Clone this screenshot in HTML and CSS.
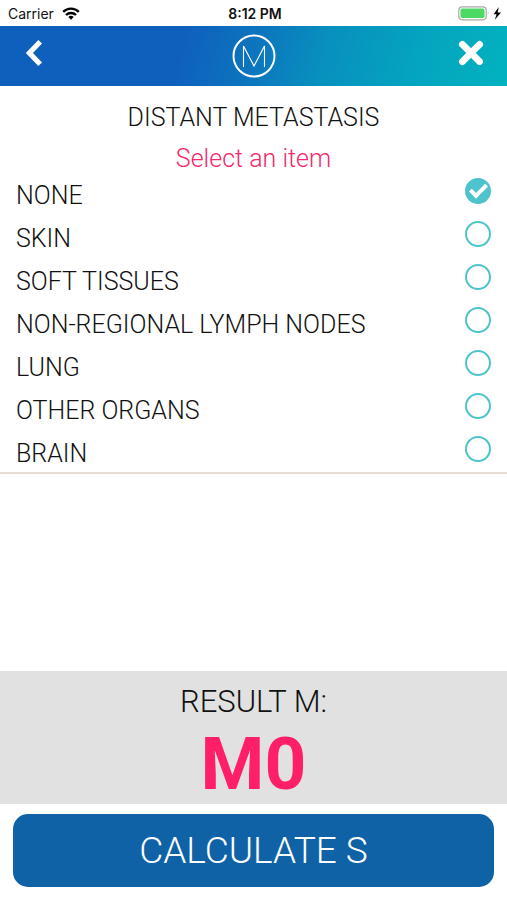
FILE: index.html
```html
<!DOCTYPE html>
<html lang="en">
<head>
<meta charset="utf-8">
<meta name="viewport" content="width=device-width, initial-scale=1">
<title>Distant metastasis</title>
<link rel="stylesheet" href="styles.css">
</head>
<body>
<div class="status">
  <div class="status-left">
    <span>Carrier</span>
    <svg width="18" height="13" viewBox="0 0 18 13" fill="none" stroke="#000" stroke-width="2.4" aria-hidden="true">
      <path d="M1.2 4.8a11.2 11.2 0 0 1 15.6 0"/>
      <path d="M4 8a7.2 7.2 0 0 1 10 0"/>
      <path d="M9 12.8L6.3 10.1a4 4 0 0 1 5.4 0z" fill="#000" stroke="none"/>
    </svg>
  </div>
  <span class="clock">8:12 PM</span>
  <div class="status-right">
    <svg width="44" height="15" viewBox="0 0 44 15" aria-hidden="true">
      <rect x=".8" y=".8" width="27.4" height="13" rx="3.5" fill="#fff" stroke="#a8a8a8" stroke-width="1.2"/>
      <rect x="2.5" y="2.5" width="24" height="9.6" rx="1.8" fill="#4cd964"/>
      <path d="M29.8 5.2q1.6 2.1 0 4.2z" fill="#a8a8a8"/>
      <path d="M40.8 1L35.6 8.2h3l-1.8 5.6 6.2-7.3h-3.4z" fill="#000"/>
    </svg>
  </div>
</div>
<header class="bar">
  <button class="bar-button" type="button" aria-label="Back">
    <svg width="28" height="28" viewBox="0 0 28 28" fill="none" stroke="#fff" stroke-width="5.2" aria-hidden="true"><path d="M18.2 2.8L7.4 14l10.8 11.2"/></svg>
  </button>
  <svg class="logo" width="44" height="44" viewBox="0 0 44 44" fill="none" stroke="#fff" aria-hidden="true">
    <circle cx="22" cy="22" r="20.5" stroke-width="2"/>
    <path d="M11.5 33V12L22 32l10.5-20V33" stroke-width="1.1"/>
  </svg>
  <button class="bar-button" type="button" aria-label="Close">
    <svg width="26" height="26" viewBox="0 0 26 26" fill="none" stroke="#fff" stroke-width="6.8" stroke-linecap="round" aria-hidden="true"><path d="M4.4 4.4l17.2 17.2M21.6 4.4L4.4 21.6"/></svg>
  </button>
</header>
<main class="content">
  <h1 class="title">DISTANT METASTASIS</h1>
  <p class="hint">Select an item</p>
  <div class="options" role="radiogroup" aria-label="Distant metastasis">
    <label class="option"><span>NONE</span><input type="radio" name="site" checked></label>
    <label class="option"><span>SKIN</span><input type="radio" name="site"></label>
    <label class="option"><span>SOFT TISSUES</span><input type="radio" name="site"></label>
    <label class="option"><span>NON-REGIONAL LYMPH NODES</span><input type="radio" name="site"></label>
    <label class="option"><span>LUNG</span><input type="radio" name="site"></label>
    <label class="option"><span>OTHER ORGANS</span><input type="radio" name="site"></label>
    <label class="option"><span>BRAIN</span><input type="radio" name="site"></label>
  </div>
</main>
<section class="result">
  <h2 class="result-label">RESULT M:</h2>
  <output class="result-value">M0</output>
</section>
<footer class="actions">
  <button class="calculate" type="button">CALCULATE S</button>
</footer>
</body>
</html>
```
FILE: styles.css
```css
*,
*::before {
  box-sizing: border-box;
}

body {
  margin: 0;
  min-height: 100vh;
  display: flex;
  flex-direction: column;
  background: #fff;
  color: #111;
  font-family: Roboto, "Liberation Sans", sans-serif;
  font-weight: 300;
}

h1, h2, p {
  margin: 0;
  font-weight: 300;
}

button {
  border: 0;
  padding: 0;
  cursor: pointer;
}

.status {
  display: grid;
  grid-template-columns: 1fr auto 1fr;
  align-items: center;
  height: 26px;
  padding: 1px 5px 0 8px;
  font: 400 14px/24px Inter, "Liberation Sans", sans-serif;
}

.status-left {
  display: flex;
  align-items: center;
  gap: 8px;
}

.status-right {
  display: flex;
  justify-content: flex-end;
}

.clock {
  font-weight: 600;
}

.bar {
  display: flex;
  align-items: center;
  justify-content: space-between;
  height: 60px;
  padding: 0 16px;
  background: linear-gradient(105deg, #0f5fbc 0%, #0f60bd 36%, #0c75be 50%, #088fbe 63%, #04a5bf 82%, #02b2bf 100%);
}

.bar-button {
  display: flex;
  align-items: center;
  justify-content: center;
  width: 40px;
  height: 40px;
  margin-bottom: 6px;
  background: transparent;
}

.content {
  flex: 1;
}

.title,
.hint {
  font-size: 25px;
  line-height: 42px;
  text-align: center;
}

.title {
  padding-top: 11px;
}

.hint {
  color: #f4286b;
  line-height: 40px;
}

.options {
  display: grid;
  gap: 2px;
  margin-top: -6px;
  border-bottom: 2px solid #e8ddd4;
}

.option {
  display: flex;
  align-items: flex-start;
  justify-content: space-between;
  padding: 5px 16px 0;
  font-size: 25px;
  line-height: 36px;
  cursor: pointer;
}

.option input {
  appearance: none;
  width: 26px;
  height: 26px;
  margin: 0;
  border: 2px solid #4fc3cb;
  border-radius: 50%;
}

.option input:checked {
  display: grid;
  place-items: center;
  background: #4fc3cb;
}

.option input:checked::before {
  content: "";
  width: 17px;
  height: 10px;
  margin-bottom: 4px;
  border: solid #fff;
  border-width: 0 0 4px 4px;
  transform: rotate(-45deg);
}

.result {
  display: flex;
  flex-direction: column;
  align-items: center;
  padding-top: 11px;
  background: #e1e1e1;
}

.result-label {
  font-size: 31px;
  line-height: 40px;
}

.result-value {
  padding-top: 2px;
  color: #ff1f69;
  font-size: 73px;
  font-weight: 700;
  line-height: 80px;
}

.actions {
  display: flex;
  padding: 10px 13px 13px;
}

.calculate {
  flex: 1;
  height: 73px;
  border-radius: 15px;
  background: #1062a6;
  color: #fff;
  font: 300 37px Roboto, "Liberation Sans", sans-serif;
}
```
